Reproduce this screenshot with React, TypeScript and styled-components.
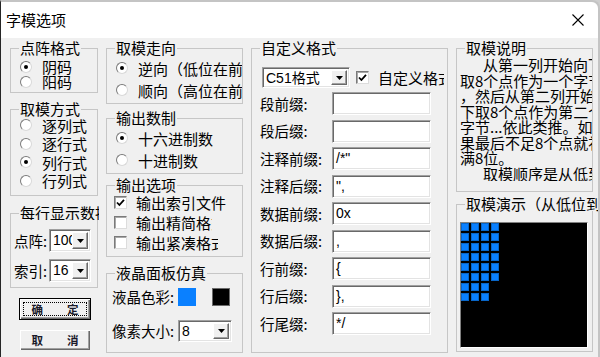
import styled, { createGlobalStyle } from "styled-components";

const GlobalStyle = createGlobalStyle`
  html, body {
    margin: 0;
    padding: 0;
    background: #cfcfcf;
  }
  body {
    font-family: "Noto Sans CJK SC", "Noto Sans", sans-serif;
    color: #000;
  }
  * {
    box-sizing: border-box;
  }
`;

const Window = styled.div`
  width: 600px;
  height: 357px;
  overflow: hidden;
  display: flex;
  flex-direction: column;
  background: #f0f0f0;
  border-top: 2px solid #c4c4c4;
  border-left: 1px solid #262626;
  border-right: 2px solid #c4c4c4;
  border-top-right-radius: 8px;
`;

const TitleBar = styled.div`
  height: 36px;
  flex: none;
  background: #fff;
  display: flex;
  align-items: center;
  justify-content: space-between;
  padding: 0 14px 0 5px;
  border-top-right-radius: 7px;
`;

const Title = styled.span`
  font-size: 15px;
  line-height: 16px;
`;

const Body = styled.div`
  flex: 1;
  display: grid;
  grid-template-columns: 88px 137px 197px 137px;
  column-gap: 8px;
  align-items: start;
  padding: 3px 0 0 9px;
`;

const Column = styled.div`
  display: flex;
  flex-direction: column;
  min-width: 0;
`;

const Group = styled.fieldset<{ $h: number; $mt?: number }>`
  margin: ${(p) => p.$mt ?? 0}px 0 0;
  padding: 0;
  height: ${(p) => p.$h}px;
  min-width: 0;
  border: 1px solid #c6c6c6;
`;

const Legend = styled.legend<{ $max?: number }>`
  margin-left: 8px;
  padding: 0 1px;
  font-size: 15px;
  line-height: 14px;
  white-space: nowrap;
  ${(p) => (p.$max ? `max-width: ${p.$max}px; overflow: hidden;` : "")}
`;

const OptionList = styled.div<{ $pad: string }>`
  display: flex;
  flex-direction: column;
  padding: ${(p) => p.$pad};
  overflow-x: clip;
  overflow-y: visible;
`;

const Option = styled.label<{ $h: number; $gap?: number; $w?: number }>`
  display: flex;
  align-items: center;
  gap: ${(p) => p.$gap ?? 10}px;
  height: ${(p) => p.$h}px;
  font-size: 15px;
  line-height: 15px;
  white-space: nowrap;
  ${(p) => (p.$w ? `width: ${p.$w}px; overflow-x: clip;` : "")}
`;

const RadioDot = styled.span<{ $on?: boolean }>`
  position: relative;
  flex: none;
  width: 12px;
  height: 12px;
  border-radius: 50%;
  background: #fff;
  border: 1px solid;
  border-color: #7a7a7a #d8d8d8 #d8d8d8 #7a7a7a;

  &::after {
    content: "";
    position: absolute;
    inset: 3px;
    border-radius: 50%;
    background: ${(p) => (p.$on ? "#000" : "transparent")};
  }
`;

const CheckBox = styled.span`
  flex: none;
  width: 13px;
  height: 13px;
  background: #fff;
  border: 1px solid;
  border-color: #7a7a7a #dcdcdc #dcdcdc #7a7a7a;
  box-shadow: inset 1px 1px 0 #a8a8a8;
  display: flex;
  align-items: center;
  justify-content: center;
`;

const ComboBox = styled.div<{ $w: number; $h: number }>`
  width: ${(p) => p.$w}px;
  height: ${(p) => p.$h}px;
  flex: none;
  display: flex;
  background: #fff;
  border: 1px solid;
  border-color: #a0a0a0 #fff #fff #a0a0a0;
  box-shadow: inset 1px 1px 0 #696969, inset -1px -1px 0 #e3e3e3;
  padding: 2px;
`;

const ComboText = styled.span`
  flex: 1;
  min-width: 0;
  overflow: hidden;
  white-space: nowrap;
  padding-left: 1px;
  font-family: "Liberation Sans", "Noto Sans CJK SC", sans-serif;
  font-size: 14px;
  line-height: 16px;
`;

const ComboButton = styled.span`
  flex: none;
  width: 16px;
  background: #f0f0f0;
  border: 1px solid;
  border-color: #fff #696969 #696969 #fff;
  box-shadow: inset -1px -1px 0 #a0a0a0;
  display: flex;
  align-items: center;
  justify-content: center;
`;

const FieldGrid = styled.div`
  display: grid;
  grid-template-columns: 35px auto;
  row-gap: 7px;
  align-items: center;
  padding: 9px 0 0 3px;
`;

const FieldLabel = styled.span`
  font-size: 14.5px;
  line-height: 16px;
  white-space: nowrap;
`;

const Button = styled.button<{ $default?: boolean; $mt: number }>`
  position: relative;
  margin: ${(p) => p.$mt}px 0 0 9px;
  width: 72px;
  height: 22px;
  padding: 0;
  display: flex;
  align-items: center;
  justify-content: center;
  gap: 24px;
  background: #f0f0f0;
  font-family: "Noto Sans CJK SC", sans-serif;
  font-size: 11.5px;
  font-weight: 700;
  color: #1a1a2a;
  border: 1px solid ${(p) => (p.$default ? "#000" : "#f0f0f0")};
  box-shadow: inset 1px 1px 0 #fff, inset -1px -1px 0 #696969, inset -2px -2px 0 #a0a0a0;

  &::after {
    content: "";
    position: absolute;
    inset: 3px;
    border: 1px dotted #000;
    display: ${(p) => (p.$default ? "block" : "none")};
  }
`;

const CustomRow = styled.div`
  display: flex;
  align-items: center;
  gap: 6px;
  height: 21px;
  margin: 12px 3px 0 10px;
  overflow: hidden;
  white-space: nowrap;
`;

const FormList = styled.div`
  display: flex;
  flex-direction: column;
  gap: 4.5px;
  padding: 4px 0 0 8px;
`;

const FormRow = styled.div`
  display: grid;
  grid-template-columns: 72px 99px;
  align-items: center;
  height: 23px;
`;

const TextField = styled.div`
  height: 23px;
  background: #fff;
  border: 1px solid;
  border-color: #a0a0a0 #fff #fff #a0a0a0;
  box-shadow: inset 1px 1px 0 #696969, inset -1px -1px 0 #e3e3e3;
  padding: 2px 3px;
  font-family: "Liberation Sans", sans-serif;
  font-size: 14px;
  line-height: 17px;
  white-space: nowrap;
  overflow: hidden;
`;

const LcdGrid = styled.div`
  display: grid;
  grid-template-columns: 66px auto;
  grid-template-rows: 18px 22px;
  row-gap: 14px;
  align-items: center;
  padding: 8px 0 0 5px;
`;

const Swatches = styled.div`
  display: flex;
  gap: 16px;
  height: 18px;
`;

const Swatch = styled.span<{ $color: string }>`
  width: 18px;
  height: 18px;
  background: ${(p) => p.$color};
  border: 1px solid ${(p) => (p.$color === "#000000" ? "#6a6a6a" : p.$color)};
`;

const Note = styled.div`
  padding: 2px 1px 0 3px;
  overflow: hidden;
  font-size: 15px;
  line-height: 15.5px;
  white-space: nowrap;
`;

const NoteLine = styled.div<{ $indent?: boolean }>`
  padding-left: ${(p) => (p.$indent ? 23 : 0)}px;
`;

const Screen = styled.div`
  margin: 11px 0 0 3px;
  width: 128px;
  height: 126px;
  background: #000;
  border: 1px solid;
  border-color: #808080 #fff #fff #808080;
  display: grid;
  grid-template-columns: repeat(4, 8px);
  grid-auto-rows: 8px;
  gap: 2px;
  align-content: start;
`;

const Pixel = styled.span<{ $on: boolean }>`
  background: ${(p) => (p.$on ? "#0a80ff" : "transparent")};
  box-shadow: ${(p) => (p.$on ? "inset 0 0 0 1px #0866c8" : "none")};
`;

function Radio({ label, on, h }: { label: string; on?: boolean; h: number }) {
  return (
    <Option $h={h}>
      <RadioDot $on={on} />
      <span>{label}</span>
    </Option>
  );
}

function CheckMark() {
  return (
    <svg width="9" height="9" viewBox="0 0 9 9">
      <polyline points="1,4.5 3.4,7 8,1.8" fill="none" stroke="#000" strokeWidth="1.8" />
    </svg>
  );
}

function Check({ label, on, h, w }: { label: string; on?: boolean; h: number; w?: number }) {
  return (
    <Option $h={h} $gap={9} $w={w}>
      <CheckBox>{on && <CheckMark />}</CheckBox>
      <span>{label}</span>
    </Option>
  );
}

function Combo({ value, w, h }: { value: string; w: number; h: number }) {
  return (
    <ComboBox $w={w} $h={h}>
      <ComboText>{value}</ComboText>
      <ComboButton>
        <svg width="7" height="4" viewBox="0 0 7 4">
          <polygon points="0,0 7,0 3.5,4" fill="#000" />
        </svg>
      </ComboButton>
    </ComboBox>
  );
}

const affixes: [string, string][] = [
  ["段前缀:", ""],
  ["段后缀:", ""],
  ["注释前缀:", '/*"'],
  ["注释后缀:", '",'],
  ["数据前缀:", "0x"],
  ["数据后缀:", ","],
  ["行前缀:", "{"],
  ["行后缀:", "},"],
  ["行尾缀:", "*/"],
];

const pixelRows = [4, 4, 4, 4, 4, 4, 3, 3];

export default function App() {
  return (
    <>
      <GlobalStyle />
      <Window>
        <TitleBar>
          <Title>字模选项</Title>
          <svg width="12" height="12" viewBox="0 0 12 12">
            <path d="M0.5 0.5 L11.5 11.5 M11.5 0.5 L0.5 11.5" stroke="#000" strokeWidth="1.1" />
          </svg>
        </TitleBar>
        <Body>
          <Column>
            <Group $h={52}>
              <Legend>点阵格式</Legend>
              <OptionList $pad="4px 0 0 9px">
                <Radio label="阴码" on h={15} />
                <Radio label="阳码" h={15} />
              </OptionList>
            </Group>
            <Group $h={94} $mt={9}>
              <Legend>取模方式</Legend>
              <OptionList $pad="0 0 0 9px">
                <Radio label="逐列式" h={18.5} />
                <Radio label="逐行式" h={18.5} />
                <Radio label="列行式" on h={18.5} />
                <Radio label="行列式" h={18.5} />
              </OptionList>
            </Group>
            <Group $h={82} $mt={10}>
              <Legend $max={80}>每行显示数据</Legend>
              <FieldGrid>
                <FieldLabel>点阵:</FieldLabel>
                <Combo value="100" w={42} h={23} />
                <FieldLabel>索引:</FieldLabel>
                <Combo value="16" w={42} h={23} />
              </FieldGrid>
            </Group>
            <Button $default $mt={10}>
              <span>确</span>
              <span>定</span>
            </Button>
            <Button $mt={9}>
              <span>取</span>
              <span>消</span>
            </Button>
          </Column>

          <Column>
            <Group $h={63}>
              <Legend>取模走向</Legend>
              <OptionList $pad="2px 0 0 9px">
                <Radio label="逆向（低位在前）" on h={22} />
                <Radio label="顺向（高位在前）" h={22} />
              </OptionList>
            </Group>
            <Group $h={63} $mt={7}>
              <Legend>输出数制</Legend>
              <OptionList $pad="2px 0 0 9px">
                <Radio label="十六进制数" on h={22} />
                <Radio label="十进制数" h={22} />
              </OptionList>
            </Group>
            <Group $h={79} $mt={4}>
              <Legend>输出选项</Legend>
              <OptionList $pad="0 0 0 7px">
                <Check label="输出索引文件" on h={20} />
                <Check label="输出精简格式" h={20} w={98} />
                <Check label="输出紧凑格式" h={20} w={104} />
              </OptionList>
            </Group>
            <Group $h={87} $mt={9}>
              <Legend>液晶面板仿真</Legend>
              <LcdGrid>
                <FieldLabel>液晶色彩:</FieldLabel>
                <Swatches>
                  <Swatch $color="#0a80ff" />
                  <Swatch $color="#000000" />
                </Swatches>
                <FieldLabel>像素大小:</FieldLabel>
                <Combo value="8" w={54} h={22} />
              </LcdGrid>
            </Group>
          </Column>

          <Column>
            <Group $h={312}>
              <Legend>自定义格式</Legend>
              <CustomRow>
                <Combo value="C51格式" w={88} h={21} />
                <Check label="自定义格式" on h={21} />
              </CustomRow>
              <FormList>
                {affixes.map(([label, value]) => (
                  <FormRow key={label}>
                    <FieldLabel>{label}</FieldLabel>
                    <TextField>{value}</TextField>
                  </FormRow>
                ))}
              </FormList>
            </Group>
          </Column>

          <Column>
            <Group $h={151}>
              <Legend>取模说明</Legend>
              <Note>
                <NoteLine $indent>从第一列开始向下</NoteLine>
                <NoteLine>取8个点作为一个字节</NoteLine>
                <NoteLine>，然后从第二列开始向</NoteLine>
                <NoteLine>下取8个点作为第二个</NoteLine>
                <NoteLine>字节...依此类推。如</NoteLine>
                <NoteLine>果最后不足8个点就补</NoteLine>
                <NoteLine>满8位。</NoteLine>
                <NoteLine $indent>取模顺序是从低到高</NoteLine>
              </Note>
            </Group>
            <Group $h={155} $mt={5}>
              <Legend>取模演示（从低位到高位）</Legend>
              <Screen>
                {pixelRows.flatMap((count, r) =>
                  [0, 1, 2, 3].map((c) => <Pixel key={`${r}-${c}`} $on={c < count} />)
                )}
              </Screen>
            </Group>
          </Column>
        </Body>
      </Window>
    </>
  );
}
